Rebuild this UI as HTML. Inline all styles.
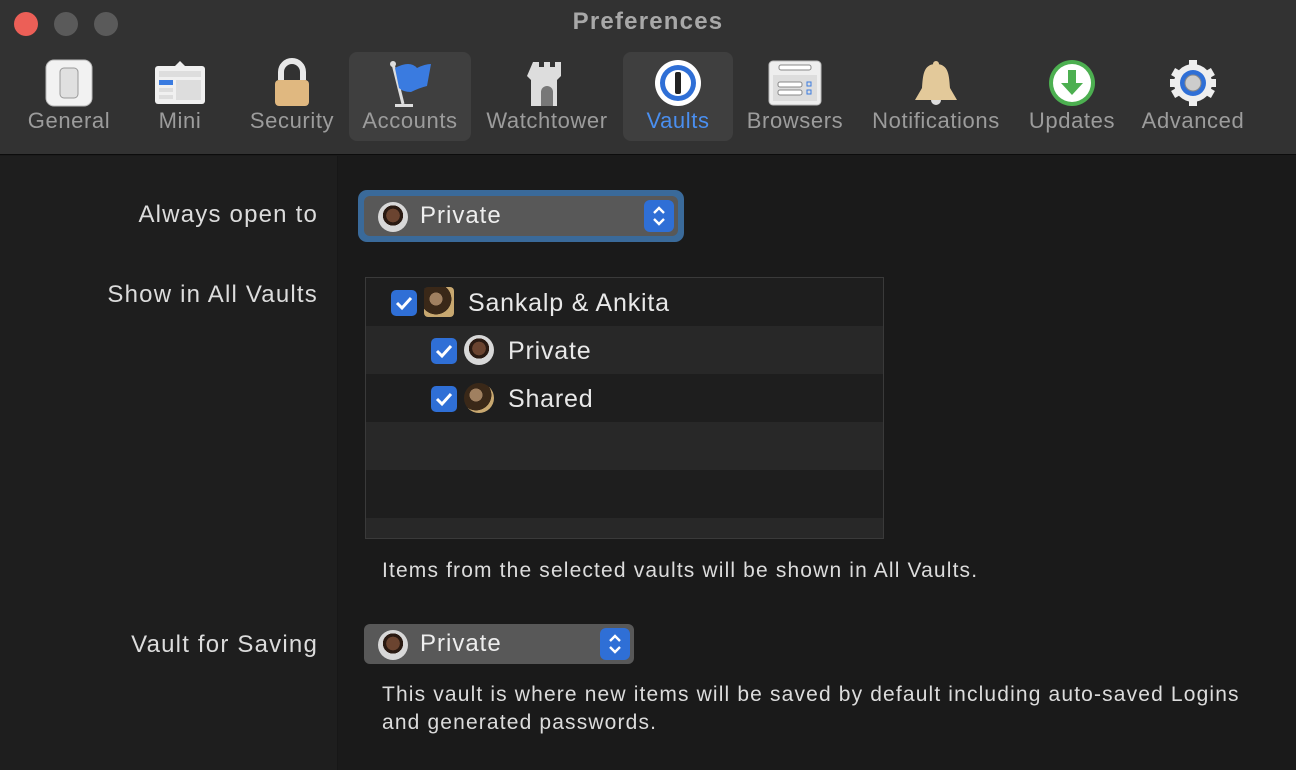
<!DOCTYPE html>
<html><head><style>
*{margin:0;padding:0;box-sizing:border-box}
body{width:1296px;height:770px;overflow:hidden;background:#1a1a1a;font-family:"Liberation Sans",sans-serif;position:relative;color:#e0e0e0}
.top{position:absolute;left:0;top:0;width:1296px;height:155px;background:#323232;border-bottom:1px solid #0c0c0c}
.dot{position:absolute;top:12px;width:24px;height:24px;border-radius:50%}
.title{position:absolute;top:8px;left:0;width:1296px;text-align:center;font-weight:bold;font-size:24px;letter-spacing:1.2px;color:#a8a8a8}
.tb{position:absolute;top:52px;height:89px;border-radius:8px;text-align:center}
.tb.sel{background:#3f3f3f}
.tb span{position:absolute;left:-20px;right:-20px;top:56px;font-size:22px;letter-spacing:0.6px;color:#9c9c9c;white-space:nowrap}
.tb svg{position:absolute;left:50%;top:6px;transform:translateX(-50%)}
.left{position:absolute;left:0;top:156px;width:338px;height:614px;background:#1e1e1e;border-right:1px solid #171717}
.lbl{position:absolute;right:978px;font-size:24px;letter-spacing:1.2px;color:#dcdcdc;white-space:nowrap}
.av{display:inline-block;width:30px;height:30px;border-radius:50%;background:radial-gradient(circle at 50% 45%,#6b4430 0 30%,#2a1a12 31% 45%,#d8d8d8 46%);vertical-align:middle}
.av2{background:radial-gradient(circle at 40% 40%,#a08060 0 25%,#3a2818 26% 60%,#c8a870 61%)}
.pop{position:absolute;background:#585858;border-radius:6px;font-size:24px;letter-spacing:1px;color:#eee}
.pop .av{position:absolute;left:14px;top:6px}
.pop .t{position:absolute;left:56px;top:6px}
.arr{position:absolute;right:4px;top:4px;width:30px;height:32px;background:#2f6fd6;border-radius:6px}
.table{position:absolute;left:365px;top:277px;width:519px;height:262px;border:1px solid #3a3a3a;background:#1e1e1e;overflow:hidden}
.row{height:48px;position:relative}
.row.l{background:#282828}
.cb{position:absolute;top:12px;width:26px;height:26px;background:#2f6fd6;border-radius:5px}
.row .av{position:absolute;top:9px}
.row .t{position:absolute;top:11px;font-size:25px;letter-spacing:0.8px;color:#e8e8e8;white-space:nowrap}
.desc{position:absolute;left:382px;font-size:21px;letter-spacing:1.15px;color:#dcdcdc;line-height:28px;white-space:nowrap}
</style></head><body>
<div class="top">
<div class="dot" style="left:14px;background:#ec5f57"></div>
<div class="dot" style="left:54px;background:#5a5a5a"></div>
<div class="dot" style="left:94px;background:#5a5a5a"></div>
<div class="title">Preferences</div>

<div class="tb" style="left:18px;width:102px"><svg width="50" height="50"><rect x="2" y="2" width="46" height="46" rx="8" fill="#f2f2f2" stroke="#bbb"/><rect x="16" y="10" width="18" height="30" rx="4" fill="#e0e0e0" stroke="#999"/></svg><span>General</span></div>
<div class="tb" style="left:140px;width:80px"><svg width="54" height="50"><path d="M22 8 L27 3 L32 8" fill="#eee"/><rect x="2" y="8" width="50" height="38" rx="3" fill="#f0f0f0"/><rect x="6" y="13" width="42" height="6" fill="#ddd"/><rect x="6" y="22" width="14" height="5" fill="#3a7be0"/><rect x="6" y="30" width="14" height="4" fill="#ddd"/><rect x="6" y="37" width="14" height="4" fill="#ddd"/><rect x="23" y="22" width="25" height="20" fill="#ddd"/></svg><span>Mini</span></div>
<div class="tb" style="left:240px;width:104px"><svg width="40" height="50"><path d="M9 22 V14 a11 11 0 0 1 22 0 V22" fill="none" stroke="#e8e8e8" stroke-width="6"/><rect x="3" y="22" width="34" height="26" rx="4" fill="#e0b880"/></svg><span>Security</span></div>
<div class="tb sel" style="left:349px;width:122px"><svg width="50" height="52"><line x1="8" y1="6" x2="18" y2="46" stroke="#ddd" stroke-width="3"/><circle cx="8" cy="6" r="3" fill="#ddd"/><path d="M10 10 Q25 2 32 10 Q40 6 46 6 L42 28 Q34 30 26 34 Q18 34 14 30 Z" fill="#3a7be0"/><rect x="10" y="46" width="18" height="3" fill="#ddd"/></svg><span>Accounts</span></div>
<div class="tb" style="left:480px;width:134px"><svg width="40" height="52"><path d="M6 4h6v5h5v-5h6v5h5v-5h6v14l-4 4v26h-26v-26l-4-4z" fill="#ddd"/><path d="M14 48 V34 a6 6 0 0 1 12 0 V48" fill="#777"/></svg><span>Watchtower</span></div>
<div class="tb sel" style="left:623px;width:110px"><svg width="50" height="50"><circle cx="25" cy="25" r="23" fill="#fff"/><circle cx="25" cy="25" r="18" fill="#2f6fd6"/><circle cx="25" cy="25" r="13" fill="#fff"/><rect x="22" y="14" width="6" height="22" rx="2" fill="#222"/></svg><span style="color:#4a8ff0">Vaults</span></div>
<div class="tb" style="left:742px;width:106px"><svg width="56" height="50"><rect x="2" y="3" width="52" height="44" rx="4" fill="#eee" stroke="#bbb"/><rect x="12" y="7" width="32" height="5" rx="2" fill="#fff" stroke="#888"/><rect x="6" y="17" width="44" height="26" fill="#ddd"/><rect x="11" y="24" width="24" height="5" rx="2" fill="#fff" stroke="#888"/><rect x="11" y="32" width="24" height="5" rx="2" fill="#fff" stroke="#888"/><rect x="40" y="24" width="4" height="4" fill="none" stroke="#3a7be0"/><rect x="40" y="32" width="4" height="4" fill="none" stroke="#3a7be0"/></svg><span>Browsers</span></div>
<div class="tb" style="left:866px;width:140px"><svg width="50" height="52"><circle cx="25" cy="6" r="3" fill="#e3c99a"/><path d="M25 6 C12 6 12 18 11 30 L4 42 H46 L39 30 C38 18 38 6 25 6Z" fill="#e3c99a"/><path d="M20 42 a5 5 0 0 0 10 0" fill="#ddd"/></svg><span>Notifications</span></div>
<div class="tb" style="left:1024px;width:96px"><svg width="50" height="50"><circle cx="25" cy="25" r="23" fill="#4caf50"/><circle cx="25" cy="25" r="19" fill="#fff"/><path d="M21 12h8v13h7l-11 12-11-12h7z" fill="#4caf50"/></svg><span>Updates</span></div>
<div class="tb" style="left:1138px;width:110px"><svg width="50" height="50"><g fill="#eee"><circle cx="25" cy="25" r="19"/><rect x="21" y="2" width="8" height="46"/><rect x="2" y="21" width="46" height="8"/><rect x="21" y="2" width="8" height="46" transform="rotate(60 25 25)"/><rect x="21" y="2" width="8" height="46" transform="rotate(-60 25 25)"/></g><circle cx="25" cy="25" r="13" fill="#2f6fd6"/><circle cx="25" cy="25" r="8" fill="#ccc" stroke="#888"/></svg><span>Advanced</span></div>
</div>

<div class="left"></div>
<div class="lbl" style="top:201px">Always open to</div>
<div class="lbl" style="top:281px">Show in All Vaults</div>
<div class="lbl" style="top:631px">Vault for Saving</div>

<div style="position:absolute;left:358px;top:190px;width:326px;height:52px;border-radius:9px;background:#3a6a9a"></div>
<div class="pop" style="left:364px;top:196px;width:314px;height:40px"><span class="av"></span><span class="t">Private</span><div class="arr"><svg width="30" height="32"><path d="M10 13l5-5 5 5M10 19l5 5 5-5" fill="none" stroke="#fff" stroke-width="2.4"/></svg></div></div>

<div class="table">
<div class="row"><div class="cb" style="left:25px"><svg width="26" height="26"><path d="M6 13l5 5 9-10" fill="none" stroke="#fff" stroke-width="3"/></svg></div><span class="av av2" style="left:58px;border-radius:4px"></span><span class="t" style="left:102px">Sankalp &amp; Ankita</span></div>
<div class="row l"><div class="cb" style="left:65px"><svg width="26" height="26"><path d="M6 13l5 5 9-10" fill="none" stroke="#fff" stroke-width="3"/></svg></div><span class="av" style="left:98px"></span><span class="t" style="left:142px">Private</span></div>
<div class="row"><div class="cb" style="left:65px"><svg width="26" height="26"><path d="M6 13l5 5 9-10" fill="none" stroke="#fff" stroke-width="3"/></svg></div><span class="av av2" style="left:98px"></span><span class="t" style="left:142px">Shared</span></div>
<div class="row l"></div>
<div class="row"></div>
<div class="row l"></div>
</div>

<div class="desc" style="top:557px">Items from the selected vaults will be shown in All Vaults.</div>

<div class="pop" style="left:364px;top:624px;width:270px;height:40px"><span class="av"></span><span class="t">Private</span><div class="arr"><svg width="30" height="32"><path d="M10 13l5-5 5 5M10 19l5 5 5-5" fill="none" stroke="#fff" stroke-width="2.4"/></svg></div></div>

<div class="desc" style="top:681px">This vault is where new items will be saved by default including auto-saved Logins<br>and generated passwords.</div>
</body></html>
